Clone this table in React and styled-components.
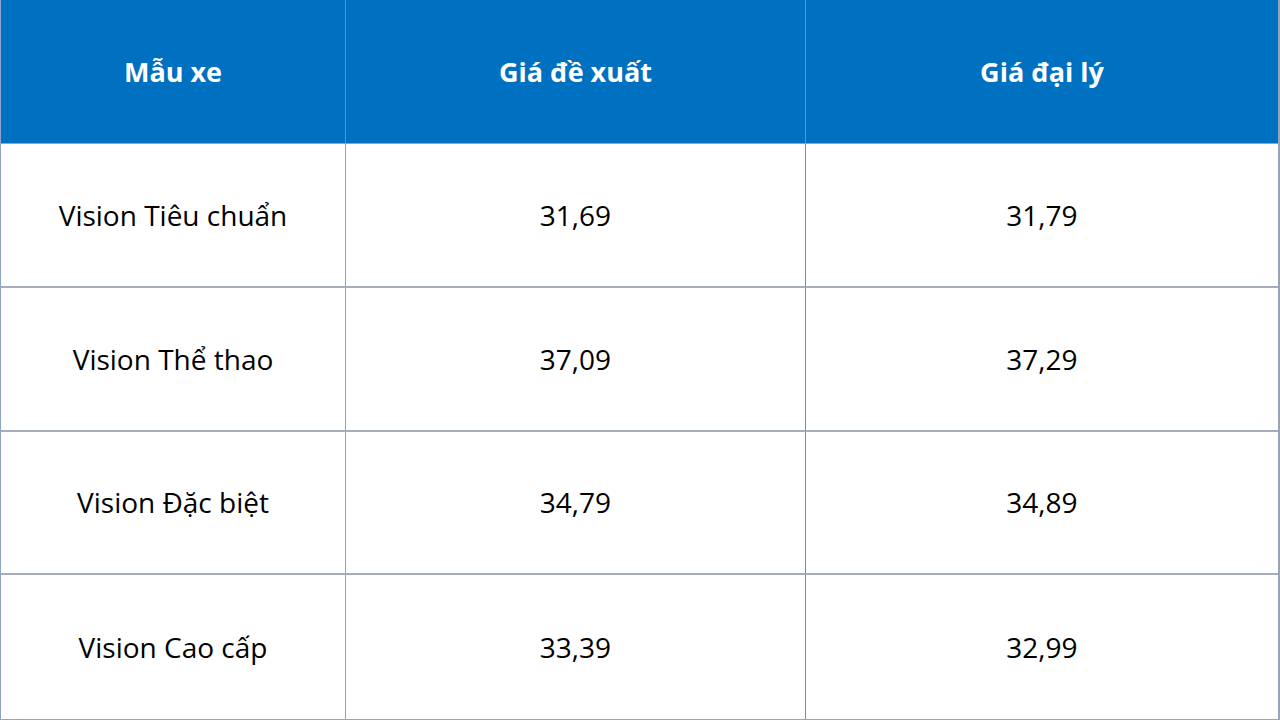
import React from "react";
import styled, { createGlobalStyle } from "styled-components";

const GlobalStyle = createGlobalStyle`
    html, body {
        margin: 0;
        padding: 0;
        background: #fff;
    }
    body {
        font-family: "Open Sans", "Noto Sans", sans-serif;
    }
`

const Table = styled.div`
    width: 1280px;
    height: 720px;
    display: grid;
    grid-template-columns: 345px 460px 1fr;
    grid-template-rows: 144px repeat(4, 1fr);
    box-sizing: border-box;
    border-left: 1px solid #8fa3cf;
    border-right: 2px solid #9aa3b8;
    border-bottom: 1px solid #9aa3b8;
`

const HeadCell = styled.div`
    background: #0070c0;
    color: #fff;
    font-weight: 700;
    font-size: 27px;
    display: flex;
    align-items: center;
    justify-content: center;
    border-right: ${p => (p.last ? "none" : "1px solid #5b8fd6")};
    border-bottom: 1px solid #8fa3cf;
`

const Cell = styled.div`
    color: #000;
    font-size: 28px;
    display: flex;
    align-items: center;
    justify-content: center;
    box-sizing: border-box;
    border-right: ${p => (p.last ? "none" : `1px solid ${p.lineColor || "#8fa3cf"}`)};
    border-bottom: ${p => (p.bottom ? "none" : "2px solid #a6adc0")};
`

const rows = [
    ["Vision Tiêu chuẩn", "31,69", "31,79"],
    ["Vision Thể thao", "37,09", "37,29"],
    ["Vision Đặc biệt", "34,79", "34,89"],
    ["Vision Cao cấp", "33,39", "32,99"],
];

export default function App() {
    return (
        <>
            <GlobalStyle />
            <Table>
                <HeadCell>Mẫu xe</HeadCell>
                <HeadCell>Giá đề xuất</HeadCell>
                <HeadCell last>Giá đại lý</HeadCell>
                {rows.map((r, i) => (
                    <React.Fragment key={i}>
                        <Cell bottom={i === rows.length - 1}>{r[0]}</Cell>
                        <Cell lineColor="#7f8aa3" bottom={i === rows.length - 1}>{r[1]}</Cell>
                        <Cell last bottom={i === rows.length - 1}>{r[2]}</Cell>
                    </React.Fragment>
                ))}
            </Table>
        </>
    )
}
